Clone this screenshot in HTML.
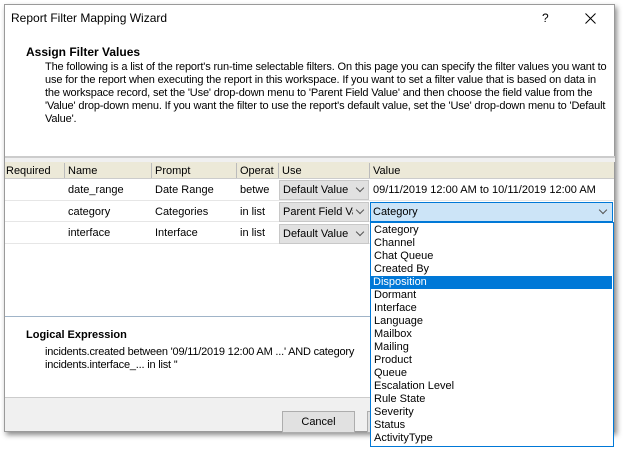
<!DOCTYPE html>
<html><head><style>
*{margin:0;padding:0;box-sizing:border-box}
body{width:625px;height:458px;background:#fff;font-family:"Liberation Sans",sans-serif;font-size:11px;color:#000;position:relative;overflow:hidden}
.a{position:absolute;white-space:nowrap}
.win{position:absolute;left:4px;top:4px;width:611px;height:428px;border:1px solid #9a9a9a;background:#fff;box-shadow:2px 3px 5px rgba(0,0,0,.45)}
.hd{background:#ece9d8;border-bottom:1px solid #ccc}
.dd{background:#e1e1e1;border:1px solid #c8c8c8}
.chev{position:absolute;width:6px;height:6px;border-right:1px solid #555;border-bottom:1px solid #555;transform:rotate(45deg)}
.it{position:absolute;left:373px;height:13px;line-height:13px;font-size:11px;width:240px;padding-left:1px}
</style></head><body>
<div class="win"></div>
<div class="a" style="left:11px;top:11px;font-size:12px">Report Filter Mapping Wizard</div>
<div class="a" style="left:542px;top:11px;font-size:12px">?</div>
<svg class="a" style="left:585px;top:13px" width="11" height="11"><path d="M0.5 0.5L10.5 10.5M10.5 0.5L0.5 10.5" stroke="#000" stroke-width="1"/></svg>
<div class="a" style="left:26px;top:45px;font-weight:bold;font-size:12px">Assign Filter Values</div>
<div class="a" style="left:45px;top:61px;font-size:11px;line-height:13px;letter-spacing:-0.15px">The following is a list of the report's run-time selectable filters. On this page you can specify the filter values you want to<br>use for the report when executing the report in this workspace. If you want to set a filter value that is based on data in<br>the workspace record, set the 'Use' drop-down menu to 'Parent Field Value' and then choose the field value from the<br>'Value' drop-down menu. If you want the filter to use the report's default value, set the 'Use' drop-down menu to 'Default<br>Value'.</div>
<div class="a" style="left:5px;top:156px;width:610px;height:2px;background:#ccc"></div>
<div class="a" style="left:5px;top:158px;width:610px;height:4px;background:#f0f0f0"></div>
<div class="a hd" style="left:5px;top:162px;width:609px;height:17px"></div>
<div class="a" style="left:6px;top:165px">Required</div>
<div class="a" style="left:68px;top:165px">Name</div>
<div class="a" style="left:155px;top:165px">Prompt</div>
<div class="a" style="left:240px;top:165px">Operat</div>
<div class="a" style="left:282px;top:165px">Use</div>
<div class="a" style="left:373px;top:165px">Value</div>
<div class="a" style="left:64px;top:163px;width:1px;height:15px;background:#bbb"></div>
<div class="a" style="left:151px;top:163px;width:1px;height:15px;background:#bbb"></div>
<div class="a" style="left:236px;top:163px;width:1px;height:15px;background:#bbb"></div>
<div class="a" style="left:278px;top:163px;width:1px;height:15px;background:#bbb"></div>
<div class="a" style="left:369px;top:163px;width:1px;height:15px;background:#bbb"></div>
<div class="a" style="left:5px;top:200px;width:609px;height:1px;background:#e6e6e6"></div>
<div class="a" style="left:5px;top:221px;width:365px;height:1px;background:#e6e6e6"></div>
<div class="a" style="left:5px;top:243px;width:365px;height:1px;background:#e6e6e6"></div>
<div class="a" style="left:68px;top:184px">date_range</div>
<div class="a" style="left:155px;top:184px">Date Range</div>
<div class="a" style="left:240px;top:184px">betwe</div>
<div class="a" style="left:68px;top:206px">category</div>
<div class="a" style="left:155px;top:206px">Categories</div>
<div class="a" style="left:240px;top:206px">in list</div>
<div class="a" style="left:68px;top:227px">interface</div>
<div class="a" style="left:155px;top:227px">Interface</div>
<div class="a" style="left:240px;top:227px">in list</div>
<div class="a dd" style="left:279px;top:180px;width:90px;height:20px"></div>
<div class="a dd" style="left:279px;top:202px;width:90px;height:20px"></div>
<div class="a dd" style="left:279px;top:224px;width:90px;height:20px"></div>
<div class="a" style="left:283px;top:184px">Default Value</div>
<div class="a" style="left:283px;top:206px;width:70px;overflow:hidden">Parent Field Value</div>
<div class="a" style="left:283px;top:228px">Default Value</div>
<div class="chev" style="left:357px;top:185px"></div>
<div class="chev" style="left:357px;top:207px"></div>
<div class="chev" style="left:357px;top:229px"></div>
<div class="a" style="left:373px;top:184px">09/11/2019 12:00 AM to 10/11/2019 12:00 AM</div>
<div class="a" style="left:370px;top:202px;width:243px;height:20px;background:#cce4f7;border:1px solid #0078d7"></div>
<div class="a" style="left:373px;top:206px">Category</div>
<div class="chev" style="left:600px;top:207px"></div>
<div class="a" style="left:5px;top:316px;width:365px;height:1px;background:#a0b4c8"></div>
<div class="a" style="left:26px;top:329px;font-weight:bold;font-size:11px">Logical Expression</div>
<div class="a" style="left:45px;top:346px;letter-spacing:-0.2px">incidents.created between '09/11/2019 12:00 AM ...' AND category</div>
<div class="a" style="left:45px;top:359px;letter-spacing:-0.2px">incidents.interface_... in list ''</div>
<div class="a" style="left:5px;top:397px;width:365px;height:34px;background:#f0f0f0;border-top:1px solid #ccc"></div>
<div class="a" style="left:282px;top:411px;width:73px;height:22px;background:#e1e1e1;border:1px solid #adadad;text-align:center;line-height:20px">Cancel</div>
<div class="a" style="left:367px;top:411px;width:5px;height:22px;background:#e1e1e1;border:1px solid #adadad"></div>
<div class="a" style="left:370px;top:222px;width:244px;height:225px;background:#fff;border:1px solid #0078d7"></div>
<div class="it" style="top:224px">Category</div>
<div class="it" style="top:237px">Channel</div>
<div class="it" style="top:250px">Chat Queue</div>
<div class="it" style="top:263px">Created By</div>
<div class="it" style="top:276px;background:#0078d7;color:#fff;left:371px;width:241px;padding-left:2px">Disposition</div>
<div class="it" style="top:289px">Dormant</div>
<div class="it" style="top:302px">Interface</div>
<div class="it" style="top:315px">Language</div>
<div class="it" style="top:328px">Mailbox</div>
<div class="it" style="top:341px">Mailing</div>
<div class="it" style="top:354px">Product</div>
<div class="it" style="top:367px">Queue</div>
<div class="it" style="top:380px">Escalation Level</div>
<div class="it" style="top:393px">Rule State</div>
<div class="it" style="top:406px">Severity</div>
<div class="it" style="top:419px">Status</div>
<div class="it" style="top:432px">ActivityType</div>
</body></html>
